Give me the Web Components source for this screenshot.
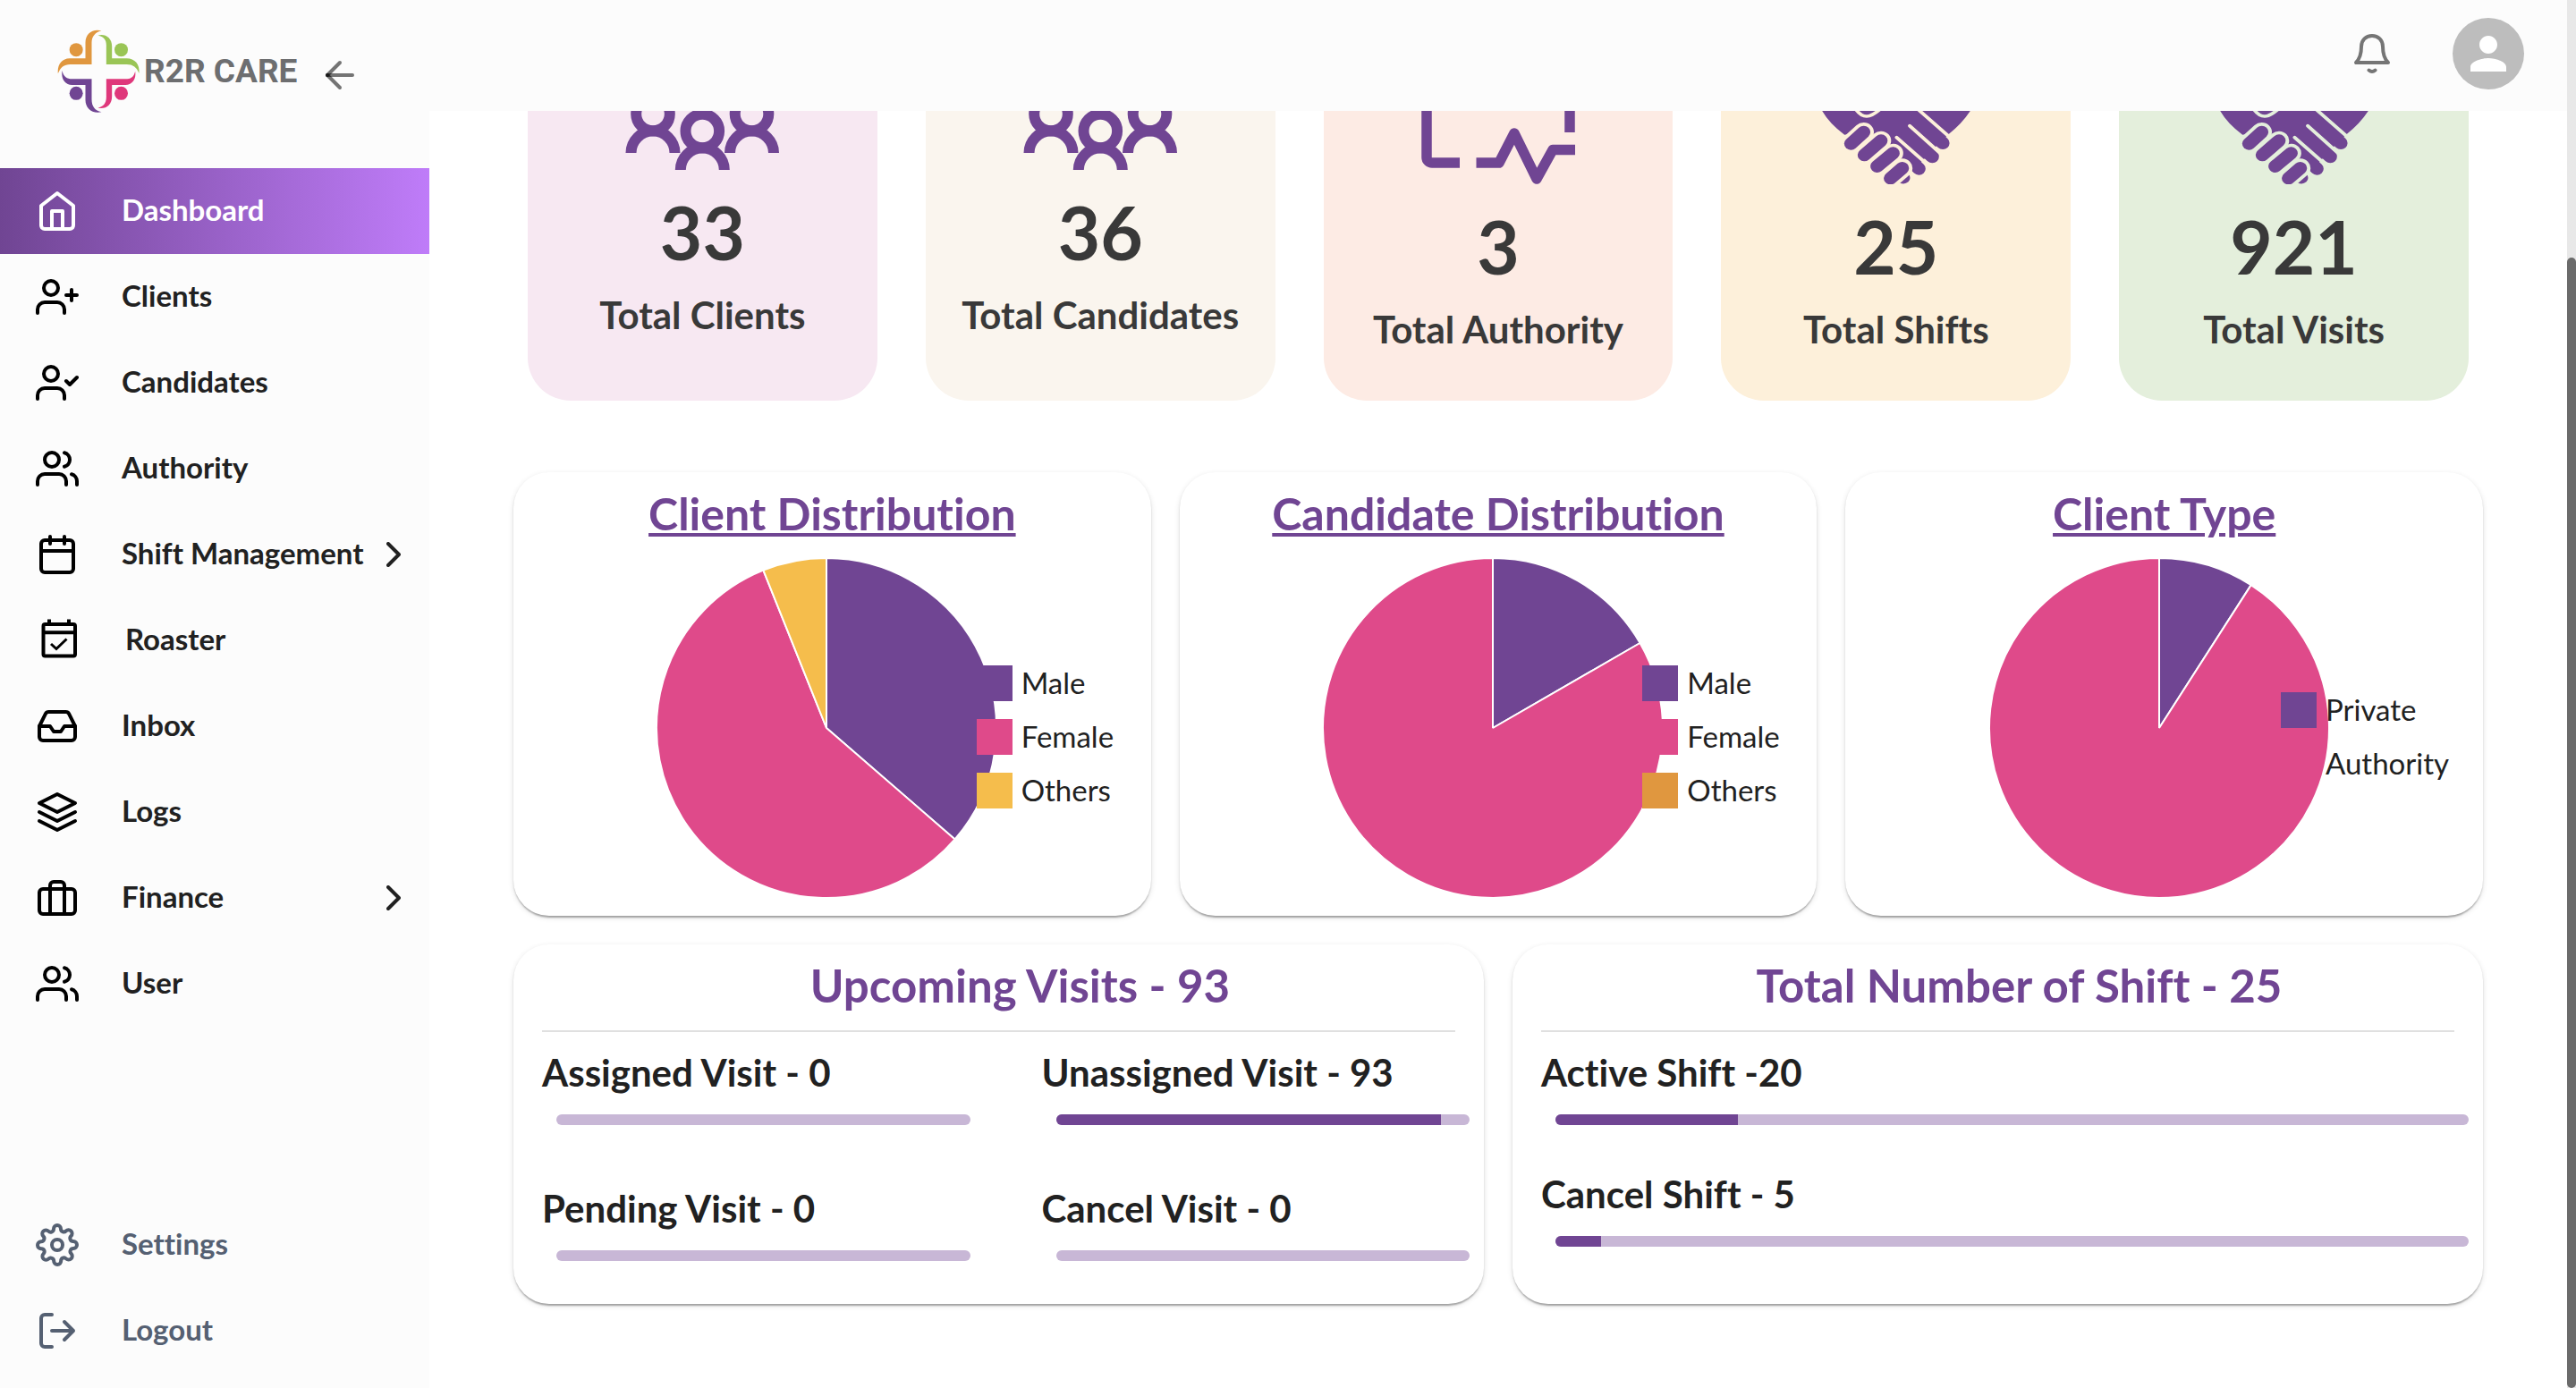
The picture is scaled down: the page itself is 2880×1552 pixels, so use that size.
<!DOCTYPE html>
<html lang="en">
<head>
<meta charset="utf-8">
<title>R2R Care – Dashboard</title>
<style>
  html, body { margin: 0; height: 100%; }
  body {
    font-family: Lato, "Open Sans", sans-serif;
    font-variant-ligatures: none;
    color: #212121;
    background: #fff;
    --brand: #704593;
    --chrome: #fcfcfc;
  }
</style>
</head>
<body>
<app-shell>
  <side-nav slot="nav">
    <nav-item icon="home" active>Dashboard</nav-item>
    <nav-item icon="userPlus">Clients</nav-item>
    <nav-item icon="userCheck">Candidates</nav-item>
    <nav-item icon="users">Authority</nav-item>
    <nav-item icon="calendar" expandable>Shift Management</nav-item>
    <nav-item icon="roster">Roaster</nav-item>
    <nav-item icon="inbox">Inbox</nav-item>
    <nav-item icon="layers">Logs</nav-item>
    <nav-item icon="briefcase" expandable>Finance</nav-item>
    <nav-item icon="users">User</nav-item>
    <nav-item slot="footer" icon="settings" muted>Settings</nav-item>
    <nav-item slot="footer" icon="logout" muted>Logout</nav-item>
  </side-nav>
  <top-bar slot="top"></top-bar>
  <stat-row>
    <stat-card art="people" value="33" tint="#f7e8f2">Total Clients</stat-card>
    <stat-card art="people" value="36" tint="#faf5ee">Total Candidates</stat-card>
    <stat-card art="pulse" value="3" tint="#fdebe4">Total Authority</stat-card>
    <stat-card art="hands" value="25" tint="#fdf0da">Total Shifts</stat-card>
    <stat-card art="hands" value="921" tint="#e4efdc">Total Visits</stat-card>
  </stat-row>
  <card-row>
    <pie-card heading="Client Distribution" data="Male:12:#704593,Female:19:#df4a8a,Others:2:#f5bd4c"></pie-card>
    <pie-card heading="Candidate Distribution" data="Male:6:#704593,Female:30:#df4a8a,Others:0:#e0973f"></pie-card>
    <pie-card heading="Client Type" wide data="Private:3:#704593,Authority:30:#df4a8a"></pie-card>
  </card-row>
  <card-row>
    <summary-card heading="Upcoming Visits - 93" columns="2">
      <progress-stat value="0">Assigned Visit - 0</progress-stat>
      <progress-stat value="93">Unassigned Visit - 93</progress-stat>
      <progress-stat value="0">Pending Visit - 0</progress-stat>
      <progress-stat value="0">Cancel Visit - 0</progress-stat>
    </summary-card>
    <summary-card heading="Total Number of Shift - 25" columns="1">
      <progress-stat value="20">Active Shift -20</progress-stat>
      <progress-stat value="5">Cancel Shift - 5</progress-stat>
    </summary-card>
  </card-row>
</app-shell>

<script>
const icons = {
  home: '<path d="M3 9l9-7 9 7v11a2 2 0 0 1-2 2H5a2 2 0 0 1-2-2z"/><path d="M9 22V12h6v10"/>',
  userPlus: '<path d="M16 21v-2a4 4 0 0 0-4-4H5a4 4 0 0 0-4 4v2"/><circle cx="8.5" cy="7" r="4"/><path d="M20 8v6M23 11h-6"/>',
  userCheck: '<path d="M16 21v-2a4 4 0 0 0-4-4H5a4 4 0 0 0-4 4v2"/><circle cx="8.5" cy="7" r="4"/><path d="M17 11l2 2 4-4"/>',
  users: '<path d="M17 21v-2a4 4 0 0 0-4-4H5a4 4 0 0 0-4 4v2"/><circle cx="9" cy="7" r="4"/><path d="M23 21v-2a4 4 0 0 0-3-3.87M16 3.13a4 4 0 0 1 0 7.75"/>',
  calendar: '<rect x="3" y="4" width="18" height="18" rx="2"/><path d="M16 2v4M8 2v4M3 10h18"/>',
  inbox: '<path d="M22 12h-6l-2 3h-4l-2-3H2"/><path d="M5.45 5.11L2 12v6a2 2 0 0 0 2 2h16a2 2 0 0 0 2-2v-6l-3.45-6.89A2 2 0 0 0 16.76 4H7.24a2 2 0 0 0-1.79 1.11z"/>',
  layers: '<path d="M12 2L2 7l10 5 10-5z"/><path d="M2 17l10 5 10-5M2 12l10 5 10-5"/>',
  briefcase: '<rect x="2" y="7" width="20" height="14" rx="2"/><path d="M16 21V5a2 2 0 0 0-2-2h-4a2 2 0 0 0-2 2v16"/>',
  settings: '<circle cx="12" cy="12" r="3"/><path d="M19.4 15a1.65 1.65 0 0 0 .33 1.82l.06.06a2 2 0 0 1 0 2.83 2 2 0 0 1-2.83 0l-.06-.06a1.65 1.65 0 0 0-1.82-.33 1.65 1.65 0 0 0-1 1.51V21a2 2 0 0 1-2 2 2 2 0 0 1-2-2v-.09A1.65 1.65 0 0 0 9 19.4a1.65 1.65 0 0 0-1.82.33l-.06.06a2 2 0 0 1-2.83 0 2 2 0 0 1 0-2.83l.06-.06a1.65 1.65 0 0 0 .33-1.82 1.65 1.65 0 0 0-1.51-1H3a2 2 0 0 1-2-2 2 2 0 0 1 2-2h.09A1.65 1.65 0 0 0 4.6 9a1.65 1.65 0 0 0-.33-1.82l-.06-.06a2 2 0 0 1 0-2.83 2 2 0 0 1 2.83 0l.06.06a1.65 1.65 0 0 0 1.82.33H9a1.65 1.65 0 0 0 1-1.51V3a2 2 0 0 1 2-2 2 2 0 0 1 2 2v.09a1.65 1.65 0 0 0 1 1.51 1.65 1.65 0 0 0 1.82-.33l.06-.06a2 2 0 0 1 2.83 0 2 2 0 0 1 0 2.83l-.06.06a1.65 1.65 0 0 0-.33 1.82V9a1.65 1.65 0 0 0 1.51 1H21a2 2 0 0 1 2 2 2 2 0 0 1-2 2h-.09a1.65 1.65 0 0 0-1.51 1z"/>',
  logout: '<path d="M9 21H5a2 2 0 0 1-2-2V5a2 2 0 0 1 2-2h4M16 17l5-5-5-5M21 12H9"/>'
};
const svg24 = body =>
  `<svg viewBox="0 0 24 24" width="48" height="48" fill="none" stroke="currentColor" stroke-width="2" stroke-linecap="round" stroke-linejoin="round" aria-hidden="true">${body}</svg>`;
const rosterIcon = `<svg viewBox="0 0 52 52" width="52" height="52" fill="none" stroke="currentColor" stroke-width="4" aria-hidden="true">
  <rect x="8.5" y="8" width="35.5" height="35.5" rx="2"/>
  <path d="M8 17.2h36M15 2.5v5M37 2.5v5"/>
  <path d="M17 30l6 5.5L34.5 24.5" stroke-width="3"/></svg>`;

const person = (x, y) => `<circle cx="${x}" cy="${y}" r="18.8"/><path d="M${x - 24.5} ${y + 43.5}a24.5 24.5 0 0 1 49 0"/>`;
const art = {
  people: `<svg width="172" height="128" viewBox="0 0 172 128" fill="none" stroke="#704593" stroke-width="12" aria-hidden="true">
    ${person(31, 65.5)}${person(141.5, 65.5)}${person(86.3, 84.5)}</svg>`,
  pulse: `<svg width="172" height="144" viewBox="0 0 172 144" fill="none" stroke="#704593" stroke-width="11.5" stroke-linejoin="round" aria-hidden="true">
    <path d="M166 86V12a6 6 0 0 0-6-6H12a6 6 0 0 0-6 6v102a6 6 0 0 0 6 6h31"/>
    <path d="M61.5 120H87L104 87l25 51 18-32.5h25"/></svg>`,
  hands: `<svg width="172" height="144" viewBox="443 186 482 432" preserveAspectRatio="none" fill="none" stroke-linecap="round" aria-hidden="true">
    <path fill="#704593" d="M452 372C420 300 440 190 560 190Q640 190 684 240Q730 190 810 190C930 190 950 300 916 372Q890 415 846 452L800 500L740 570L700 566L674 514L636 472L582 442L522 452Q475 415 452 372Z"/>
    <g stroke="#704593" stroke-width="42"><path d="M750 400L830 480"/><path d="M720 450L797 526"/><path d="M690 500L755 566"/></g>
    <g stroke="var(--tint)" stroke-width="11"><path d="M690 308L862 470"/><path d="M726 422L816 508"/><path d="M685 461L780 550"/></g>
    <g stroke="var(--tint)" stroke-width="64"><path d="M582 443L542 482"/><path d="M636 472L584 520"/><path d="M674 514L624 558"/><path d="M703 564L666 598"/></g>
    <g stroke="#704593" stroke-width="42"><path d="M582 443L542 482"/><path d="M636 472L584 520"/><path d="M674 514L624 558"/><path d="M703 564L666 598"/></g>
    <path fill="#704593" d="M696 614L725 587Q731 600 722 610Q711 620 696 614Z"/>
    <path stroke="var(--tint)" stroke-width="11" d="M548 350Q568 391 592 390Q610 390 640 360"/></svg>`
};

function define(name, render) {
  customElements.define(name, class extends HTMLElement {
    constructor() { super(); this.attachShadow({ mode: 'open' }); }
    connectedCallback() { this.shadowRoot.innerHTML = render(this); }
  });
}

define('app-shell', () => `
  <style>
    :host { display: grid; grid-template-columns: 480px minmax(0, 1fr) 10px; grid-template-rows: auto minmax(0, 1fr); height: 100vh; overflow: hidden; }
    main { grid-column: 2; display: flex; flex-direction: column; justify-content: flex-end; overflow: hidden; }
    .page { flex: none; display: flex; flex-direction: column; gap: 32px; padding: 0 94px 94px; }
    .bar { grid-column: 3; grid-row: 1 / 3; display: grid; grid-template-rows: 288fr 1264fr; background: #e8e8e8; }
    .thumb { grid-row: 2; border-radius: 5px; background: #6b6b6b; }
  </style>
  <slot name="nav"></slot>
  <slot name="top"></slot>
  <main><div class="page"><slot></slot></div></main>
  <div class="bar" aria-hidden="true"><div class="thumb"></div></div>`);

define('side-nav', () => `
  <style>
    :host { grid-row: 1 / 3; display: flex; flex-direction: column; background: var(--chrome); padding-bottom: 16px; }
    .brand { display: flex; align-items: center; gap: 4px; padding: 32px 0 60px 64px; height: 96px; }
    .name { width: 191px; font: 700 37px/48px Roboto, "Liberation Sans", sans-serif; color: #6d6e70; white-space: nowrap; }
    button { display: block; border: 0; padding: 8px 0 0; background: none; }
    svg { display: block; flex: none; }
    nav { display: flex; flex-direction: column; flex: 1; }
    .foot { margin-top: auto; }
  </style>
  <div class="brand">
    <svg width="93" height="94" viewBox="194 98 278 282" role="img" aria-label="Logo">
      <g fill="#e0973f"><circle cx="257" cy="166" r="22.5"/><path d="M342 102C312 94 288 112 288 142V195H235C208 196 193 216 196 246C204 225 216 215 237 215H309V142C309 122 322 106 342 102Z"/></g>
      <g fill="#9ac556"><circle cx="408" cy="166" r="22.5"/><path d="M330 118C354 111 377 126 377 154V195H426C454 195 471 215 468 245C460 225 448 215 426 215H358V150C358 132 349 121 330 118Z"/></g>
      <g fill="#704593"><circle cx="257" cy="312" r="22.5"/><path d="M210 236C215 257 226 264 243 264H309V332C309 356 320 370 342 375C310 382 288 362 288 334V284H243C219 283 206 264 210 236Z"/></g>
      <g fill="#df387b"><circle cx="408" cy="312" r="22.5"/><path d="M455 238C450 258 440 264 422 264H358V325C358 345 348 356 330 361C358 366 377 350 377 322V284H422C446 283 459 264 455 238Z"/></g>
    </svg>
    <span class="name">R2R CARE</span>
    <button type="button" aria-label="Collapse menu">
      <svg width="48" height="48" viewBox="0 0 48 48" fill="none" stroke="#000" stroke-opacity=".54" stroke-width="4" stroke-linecap="round" stroke-linejoin="round"><path d="M38 24H10"/><path d="M24 10L10 24"/><path d="M24 38L10 24"/></svg>
    </button>
  </div>
  <nav aria-label="Main"><slot></slot><div class="foot"><slot name="footer"></slot></div></nav>`);

define('nav-item', el => `
  <style>
    :host { display: block; }
    a { display: flex; align-items: center; gap: 48px; height: 96px; padding: 0 32px 0 40px; box-sizing: border-box; color: #212121; text-decoration: none; font-size: 33px; line-height: 40px; font-weight: 700; white-space: nowrap; }
    .glyph { display: flex; color: #000; }
    svg { display: block; flex: none; }
    .label { flex: 1; width: 0; padding-bottom: 4px; }
    :host([active]) a { background: linear-gradient(90deg, #704593, #bf7cf9); color: #fff; }
    :host([active]) .glyph { color: #fff; }
    :host([muted]) a, :host([muted]) .glyph { color: #556072; }
  </style>
  <a href="#"><span class="glyph">${el.getAttribute('icon') === 'roster' ? rosterIcon : svg24(icons[el.getAttribute('icon')])}</span><span class="label"><slot></slot></span>${
    el.hasAttribute('expandable') ? `<svg width="16" height="28" viewBox="0 0 16 28" fill="none" stroke="currentColor" stroke-width="4" stroke-linecap="round" stroke-linejoin="round" aria-hidden="true"><path d="M2 2l12 12L2 26"/></svg>` : ''}</a>`);

define('top-bar', () => `
  <style>
    :host { display: flex; justify-content: flex-end; gap: 50px; padding: 20px 48px 24px; background: var(--chrome); }
    button { display: flex; align-items: center; justify-content: center; width: 80px; height: 80px; padding: 0; border: 0; border-radius: 50%; background: none; }
    .avatar { background: #bdbdbd; }
  </style>
  <button type="button" aria-label="Notifications">
    <svg width="48" height="48" viewBox="0 0 48 48" fill="none" stroke="#757575" stroke-width="4" stroke-linecap="round" stroke-linejoin="round"><path d="M24 4C17 4 12 9 12 16C12 25 10 30 6 34H42C38 30 36 25 36 16C36 9 31 4 24 4Z"/><path d="M20.5 42.5q3.5 3 7 0"/></svg>
  </button>
  <button type="button" class="avatar" aria-label="Account">
    <svg width="60" height="60" viewBox="0 0 24 24" fill="#fff"><path d="M12 12c2.21 0 4-1.79 4-4s-1.79-4-4-4-4 1.79-4 4 1.79 4 4 4zm0 2c-2.67 0-8 1.34-8 4v2h16v-2c0-2.66-5.33-4-8-4z"/></svg>
  </button>`);

define('stat-row', () => `
  <style>:host { display: grid; grid-template-columns: repeat(5, minmax(0, 1fr)); gap: 54px; margin: 0 16px 48px; }</style>
  <slot></slot>`);

define('stat-card', el => `
  <style>
    :host { --tint: ${el.getAttribute('tint')}; display: flex; flex-direction: column; align-items: center; gap: 21px; min-height: 416px; box-sizing: border-box; padding: 30px 8px 0; border-radius: 48px; background: var(--tint); color: #393939; text-align: center; font-weight: 700; }
    svg { display: block; flex: none; }
    .value { font-size: 82px; line-height: 96px; }
    .label { font-size: 42px; line-height: 48px; white-space: nowrap; }
  </style>
  ${art[el.getAttribute('art')]}
  <div class="value">${el.getAttribute('value')}</div>
  <div class="label"><slot></slot></div>`);

define('card-row', () => `
  <style>:host { display: grid; grid-auto-flow: column; grid-auto-columns: minmax(0, 1fr); gap: 32px; }</style>
  <slot></slot>`);

const cardCss = `
    :host { display: block; box-sizing: border-box; border-radius: 40px; background: #fff; box-shadow: 0 4px 2px -2px rgba(0,0,0,.2), 0 2px 2px rgba(0,0,0,.14), 0 2px 6px rgba(0,0,0,.12); }
    h2 { margin: 0; font-size: 50px; line-height: 60px; font-weight: 700; color: var(--brand); text-align: center; white-space: nowrap; }`;

define('pie-card', el => {
  const parts = el.getAttribute('data').split(',').map(p => {
    const [label, n, color] = p.split(':');
    return { label, n: +n, color };
  });
  const total = parts.reduce((s, p) => s + p.n, 0);
  const point = t => `${(190 + 190 * Math.sin(2 * Math.PI * t)).toFixed(2)} ${(190 - 190 * Math.cos(2 * Math.PI * t)).toFixed(2)}`;
  let at = 0;
  const slices = parts.filter(p => p.n).map(p => {
    const from = at, to = at + p.n / total;
    at = to;
    return `<path fill="${p.color}" d="M190 190L${point(from)}A190 190 0 ${to - from > .5 ? 1 : 0} 1 ${point(to)}Z"/>`;
  }).join('');
  return `
  <style>${cardCss}
    :host { padding: 16px 0 20px; }
    h2 { text-decoration: underline; text-decoration-thickness: 4px; text-underline-offset: 3px; }
    .chart { display: grid; grid-template-columns: minmax(0, 1fr); align-items: center; margin-top: 20px; padding-right: 12px; }
    svg, ul { grid-area: 1 / 1; }
    svg { display: block; justify-self: center; }
    ul { justify-self: end; display: flex; flex-direction: column; gap: 20px; width: 153px; margin: 20px 30px 0 0; padding: 0; list-style: none; font-size: 33px; line-height: 38px; }
    :host([wide]) ul { width: 184px; }
    li { display: flex; gap: 10px; white-space: nowrap; }
    i { flex: none; width: 40px; height: 40px; }
  </style>
  <h2>${el.getAttribute('heading')}</h2>
  <div class="chart">
    <svg width="380" height="380" viewBox="0 0 380 380" stroke="#fff" stroke-width="2" stroke-linejoin="bevel" role="img" aria-label="${el.getAttribute('heading')}">${slices}</svg>
    <ul>${parts.map(p => `<li><i style="background:${p.color}"></i><span>${p.label}</span></li>`).join('')}</ul>
  </div>`;
});

define('summary-card', el => `
  <style>${cardCss}
    :host { padding: 16px 32px 48px; }
    h2 { font-size: 51px; padding-left: 48px; }
    hr { height: 2px; margin: 20px 0; border: 0; background: #e0e0e0; }
    .grid { display: grid; grid-template-columns: repeat(${el.getAttribute('columns')}, minmax(0, 1fr)); gap: ${el.getAttribute('columns') === '2' ? 68 : 52}px 96px; }
  </style>
  <h2>${el.getAttribute('heading')}</h2>
  <hr>
  <div class="grid"><slot></slot></div>`);

define('progress-stat', el => `
  <style>
    :host { display: block; }
    label { display: block; font-size: 42px; line-height: 50px; font-weight: 700; white-space: nowrap; }
    progress { appearance: none; -webkit-appearance: none; display: block; width: 100%; height: 12px; margin: 22px 0 0 16px; border: 0; border-radius: 6px; overflow: hidden; background: #c8b7d6; }
    progress::-webkit-progress-bar { background: #c8b7d6; }
    progress::-webkit-progress-value { background: #704593; }
    progress::-moz-progress-bar { background: #704593; }
  </style>
  <label for="bar"><slot></slot></label>
  <progress id="bar" max="100" value="${el.getAttribute('value')}"></progress>`);
</script>
</body>
</html>
